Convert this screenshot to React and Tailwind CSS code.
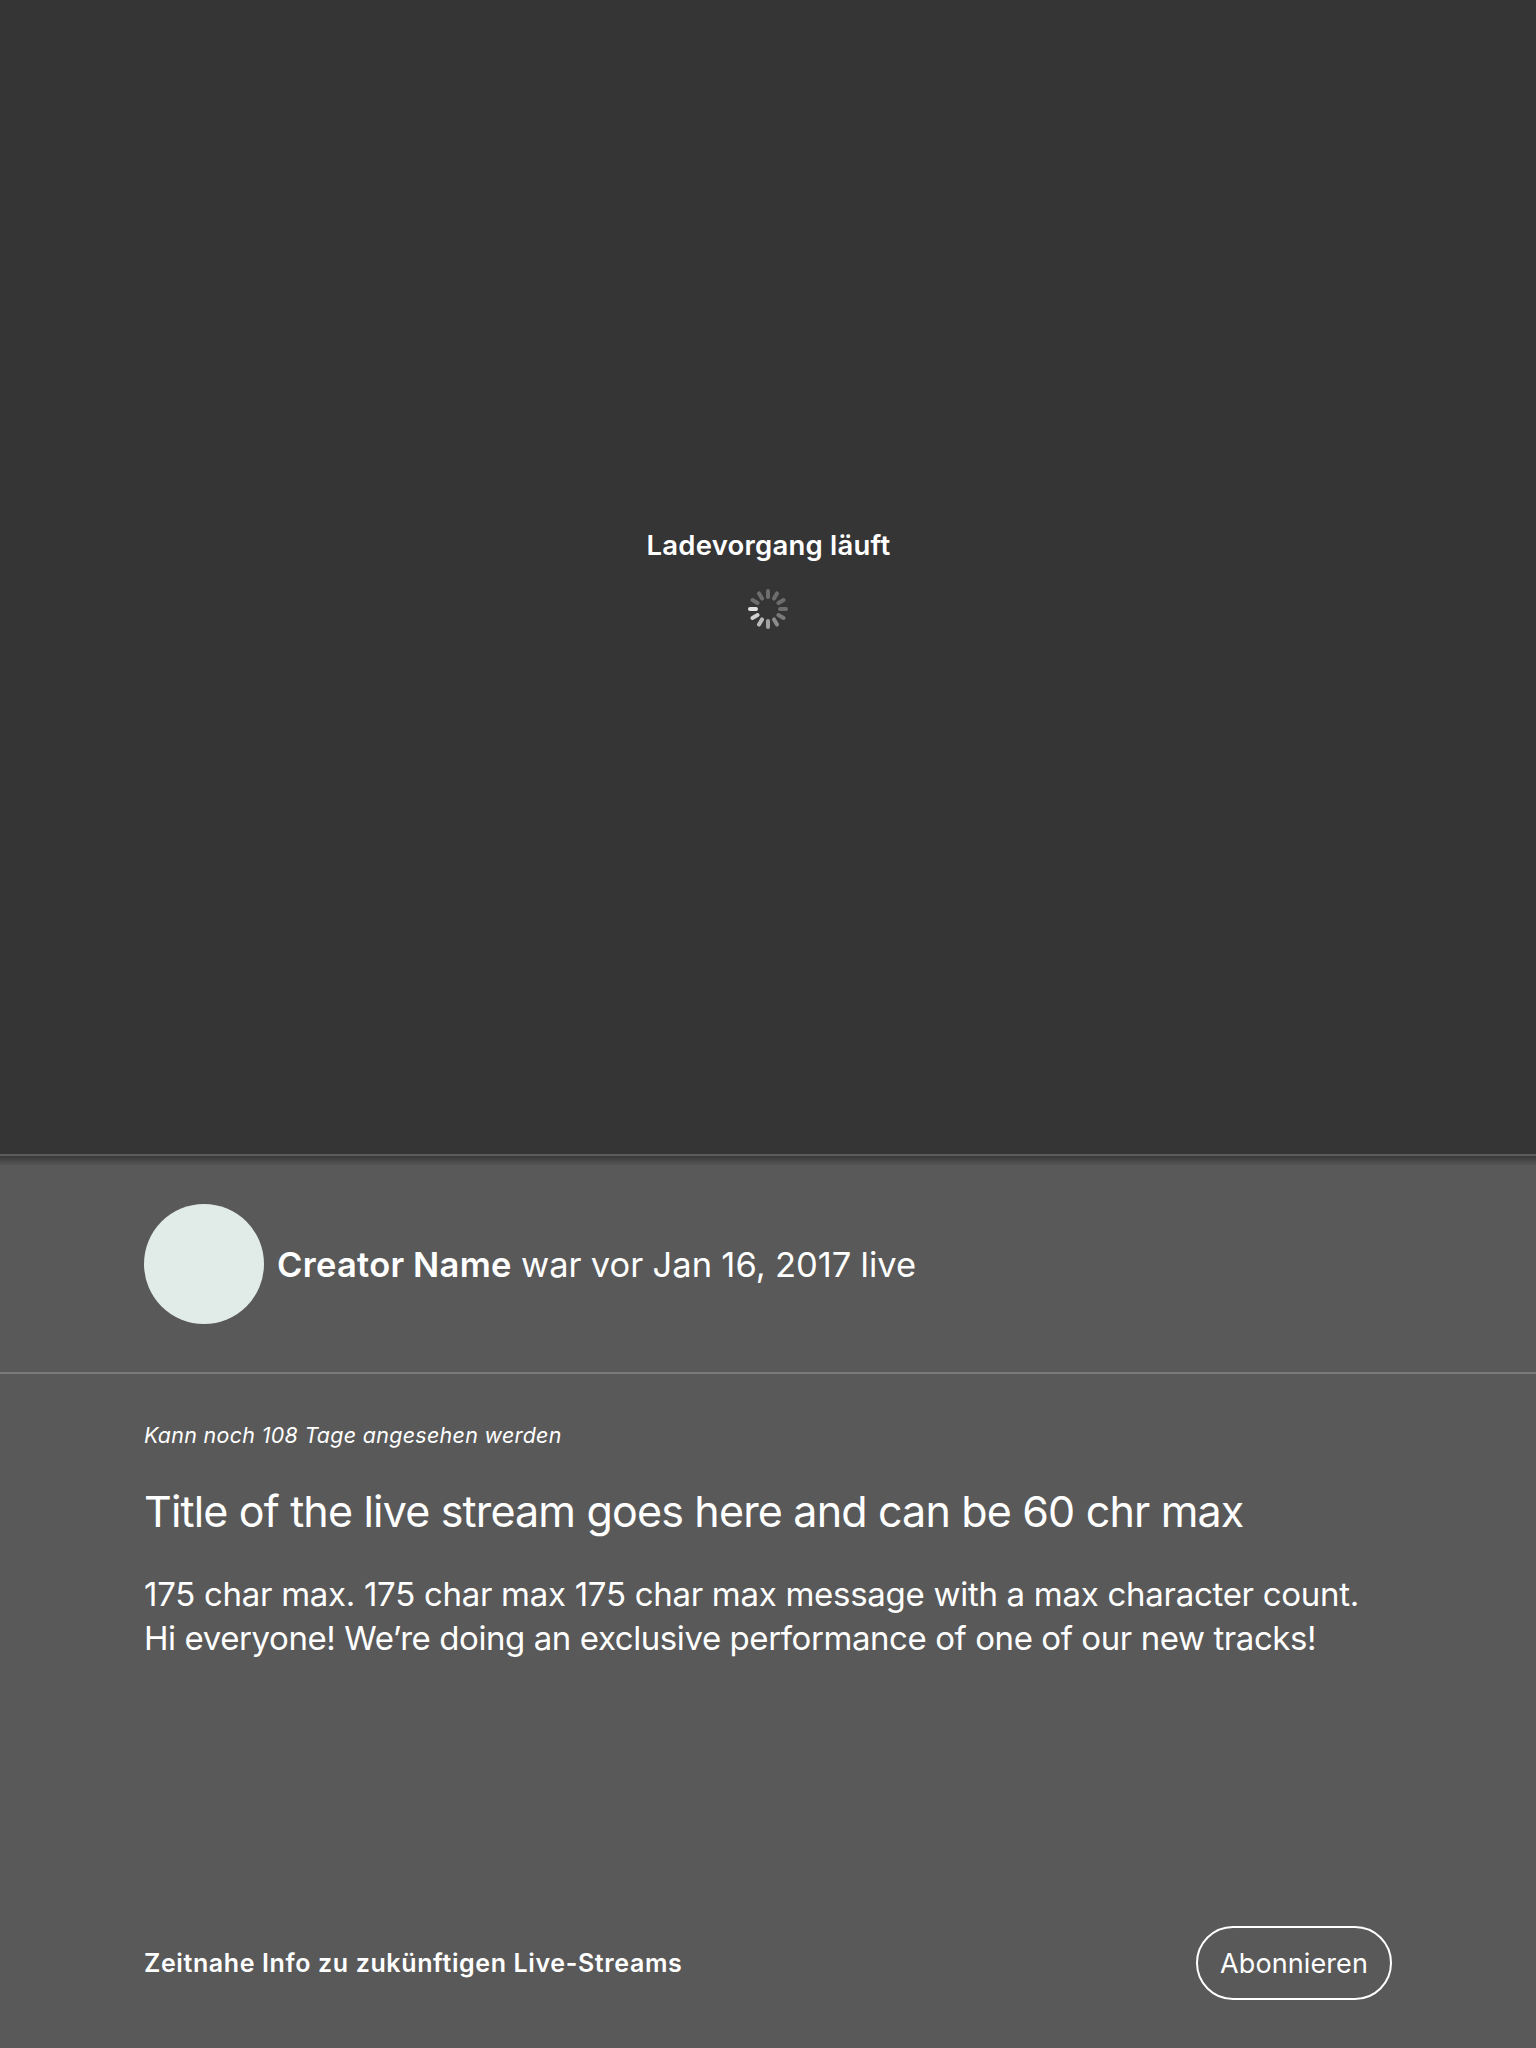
const petals = [0.28, 0.28, 0.28, 0.28, 0.34, 0.43, 0.54, 0.66, 0.77, 0.86, 0.28, 0.28];

export default function App() {
  return (
    <main className="flex h-[2048px] w-[1536px] flex-col bg-[#595959] font-['Inter',sans-serif] text-white">
      <section className="flex h-[1154px] shrink-0 flex-col items-center bg-[#353535] pt-[528px]">
        <h2 className="pl-px text-[27.5px] leading-[34px] font-semibold tracking-[0.22px] whitespace-nowrap">Ladevorgang läuft</h2>
        <svg className="mt-[27px] h-10 w-10" viewBox="0 0 40 40">
          {petals.map((o, i) => (
            <rect key={i} x="18" y="0" width="4" height="10" rx="2" fill="#fff" opacity={o} transform={`rotate(${i * 30} 20 20)`} />
          ))}
        </svg>
      </section>
      <section className="flex h-[220px] shrink-0 flex-col border-t-2 border-b-2 border-t-[#5c5c5c] border-b-[#7a7a7a]">
        <div className="h-[10px] shrink-0 bg-linear-to-b from-[#383838] to-[#595959]" />
        <div className="-mt-[10px] flex flex-1 items-center gap-[13px] pl-36">
          <div className="h-[120px] w-[120px] rounded-full bg-[#e1ebe8]" />
          <p className="pt-[2px] text-[34.5px] tracking-[0.03px] whitespace-nowrap [word-spacing:-0.5px]">
            <b className="font-semibold tracking-[0.3px]">Creator Name</b> war vor Jan 16, 2017 live
          </p>
        </div>
      </section>
      <section className="flex flex-1 flex-col px-36 pt-[47px]">
        <p className="text-[21.4px] leading-[28px] tracking-[0.33px] italic whitespace-nowrap"><span>Kann noch 108 Tage angesehen werden</span></p>
        <h1 className="mt-[34px] text-[43px] leading-[56px] tracking-[-0.83px] whitespace-nowrap"><span>Title of the live stream goes here and can be 60 chr max</span></h1>
        <p className="mt-[33px] text-[33px] leading-[44px] whitespace-nowrap">
          <span className="tracking-[-0.285px]">175 char max. 175 char max 175 char max message with a max character count.</span>
          <br />
          <span className="tracking-[-0.42px]">Hi everyone! We’re doing an exclusive performance of one of our new tracks!</span>
        </p>
      </section>
      <footer className="flex h-[122px] items-start justify-between px-36">
        <p className="mt-[18px] text-[25px] leading-[39px] font-semibold tracking-[0.62px] whitespace-nowrap">Zeitnahe Info zu zukünftigen Live-Streams</p>
        <button className="h-[74px] w-[196px] rounded-full border-2 border-white pt-[2px] text-[27px] tracking-[0.1px]"><span>Abonnieren</span></button>
      </footer>
    </main>
  );
}
